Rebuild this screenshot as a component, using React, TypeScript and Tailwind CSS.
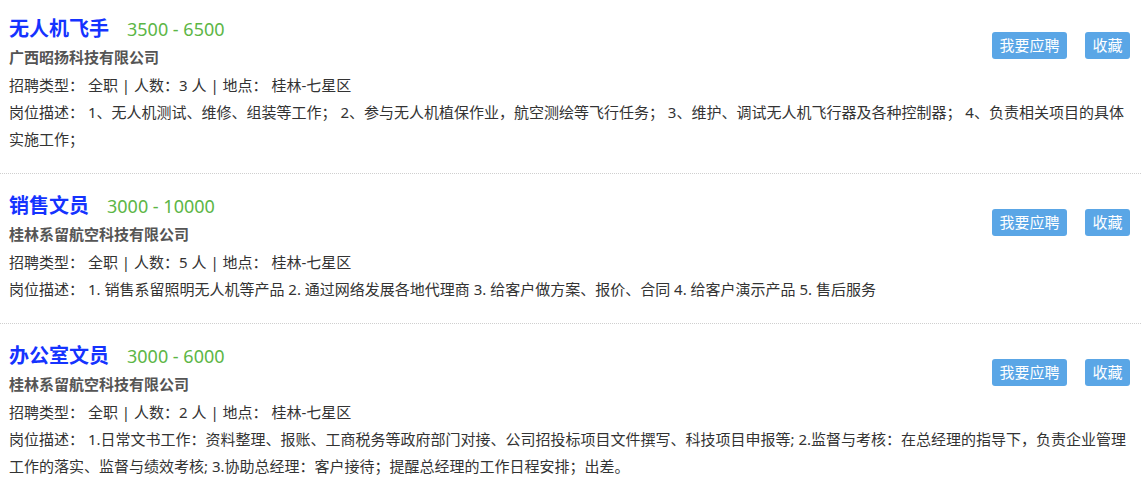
import React from 'react';

type Job = {
  title: string;
  salary: string;
  company: string;
  type: string;
  count: number;
  place: string;
  desc: string;
};

const jobs: Job[] = [
  {
    title: '无人机飞手',
    salary: '3500 - 6500',
    company: '广西昭扬科技有限公司',
    type: '全职',
    count: 3,
    place: '桂林-七星区',
    desc: '1、无人机测试、维修、组装等工作； 2、参与无人机植保作业，航空测绘等飞行任务； 3、维护、调试无人机飞行器及各种控制器； 4、负责相关项目的具体实施工作；',
  },
  {
    title: '销售文员',
    salary: '3000 - 10000',
    company: '桂林系留航空科技有限公司',
    type: '全职',
    count: 5,
    place: '桂林-七星区',
    desc: '1. 销售系留照明无人机等产品 2. 通过网络发展各地代理商 3. 给客户做方案、报价、合同 4. 给客户演示产品 5. 售后服务',
  },
  {
    title: '办公室文员',
    salary: '3000 - 6000',
    company: '桂林系留航空科技有限公司',
    type: '全职',
    count: 2,
    place: '桂林-七星区',
    desc: '1.日常文书工作：资料整理、报账、工商税务等政府部门对接、公司招投标项目文件撰写、科技项目申报等; 2.监督与考核：在总经理的指导下，负责企业管理工作的落实、监督与绩效考核; 3.协助总经理：客户接待；提醒总经理的工作日程安排；出差。',
  },
];

function JobCard({ job, first }: { job: Job; first: boolean }) {
  return (
    <div
      className={`border-b border-dotted border-[#cfcfcf] pb-[20px] pl-[9px] pr-[11px] ${
        first ? 'pt-[15px]' : 'pt-[18px]'
      }`}
    >
      <div className="flex items-start justify-between">
        <div>
          <div className="flex items-center h-[28px]">
            <span className="text-[20px] font-bold text-[#1533ff] leading-[28px]">{job.title}</span>
            <span className="ml-[18px] text-[18px] text-[#5cb646] leading-[28px]">{job.salary}</span>
          </div>
          <div className="text-[15px] font-bold text-[#555] leading-[28px]">{job.company}</div>
        </div>
        <div className="flex gap-[18px] mt-[17px]">
          <button className="h-[27px] px-[7.5px] rounded-[3px] bg-[#5aa6e6] text-white text-[15px] leading-[27px]">
            我要应聘
          </button>
          <button className="h-[27px] px-[7.5px] rounded-[3px] bg-[#5aa6e6] text-white text-[15px] leading-[27px]">
            收藏
          </button>
        </div>
      </div>
      <div className="text-[15px] text-[#333] leading-[28px]">
        招聘类型： {job.type} | 人数：{job.count} 人 | 地点： {job.place}
      </div>
      <div className="text-[15px] text-[#333] leading-[27px]">岗位描述： {job.desc}</div>
    </div>
  );
}

export default function App() {
  return (
    <div
      className="w-[1141px] h-[484px] overflow-hidden bg-white"
      style={{ fontFamily: '"Noto Sans", "Noto Sans CJK SC", sans-serif' }}
    >
      {jobs.map((job, i) => (
        <JobCard key={job.title} job={job} first={i === 0} />
      ))}
    </div>
  );
}
